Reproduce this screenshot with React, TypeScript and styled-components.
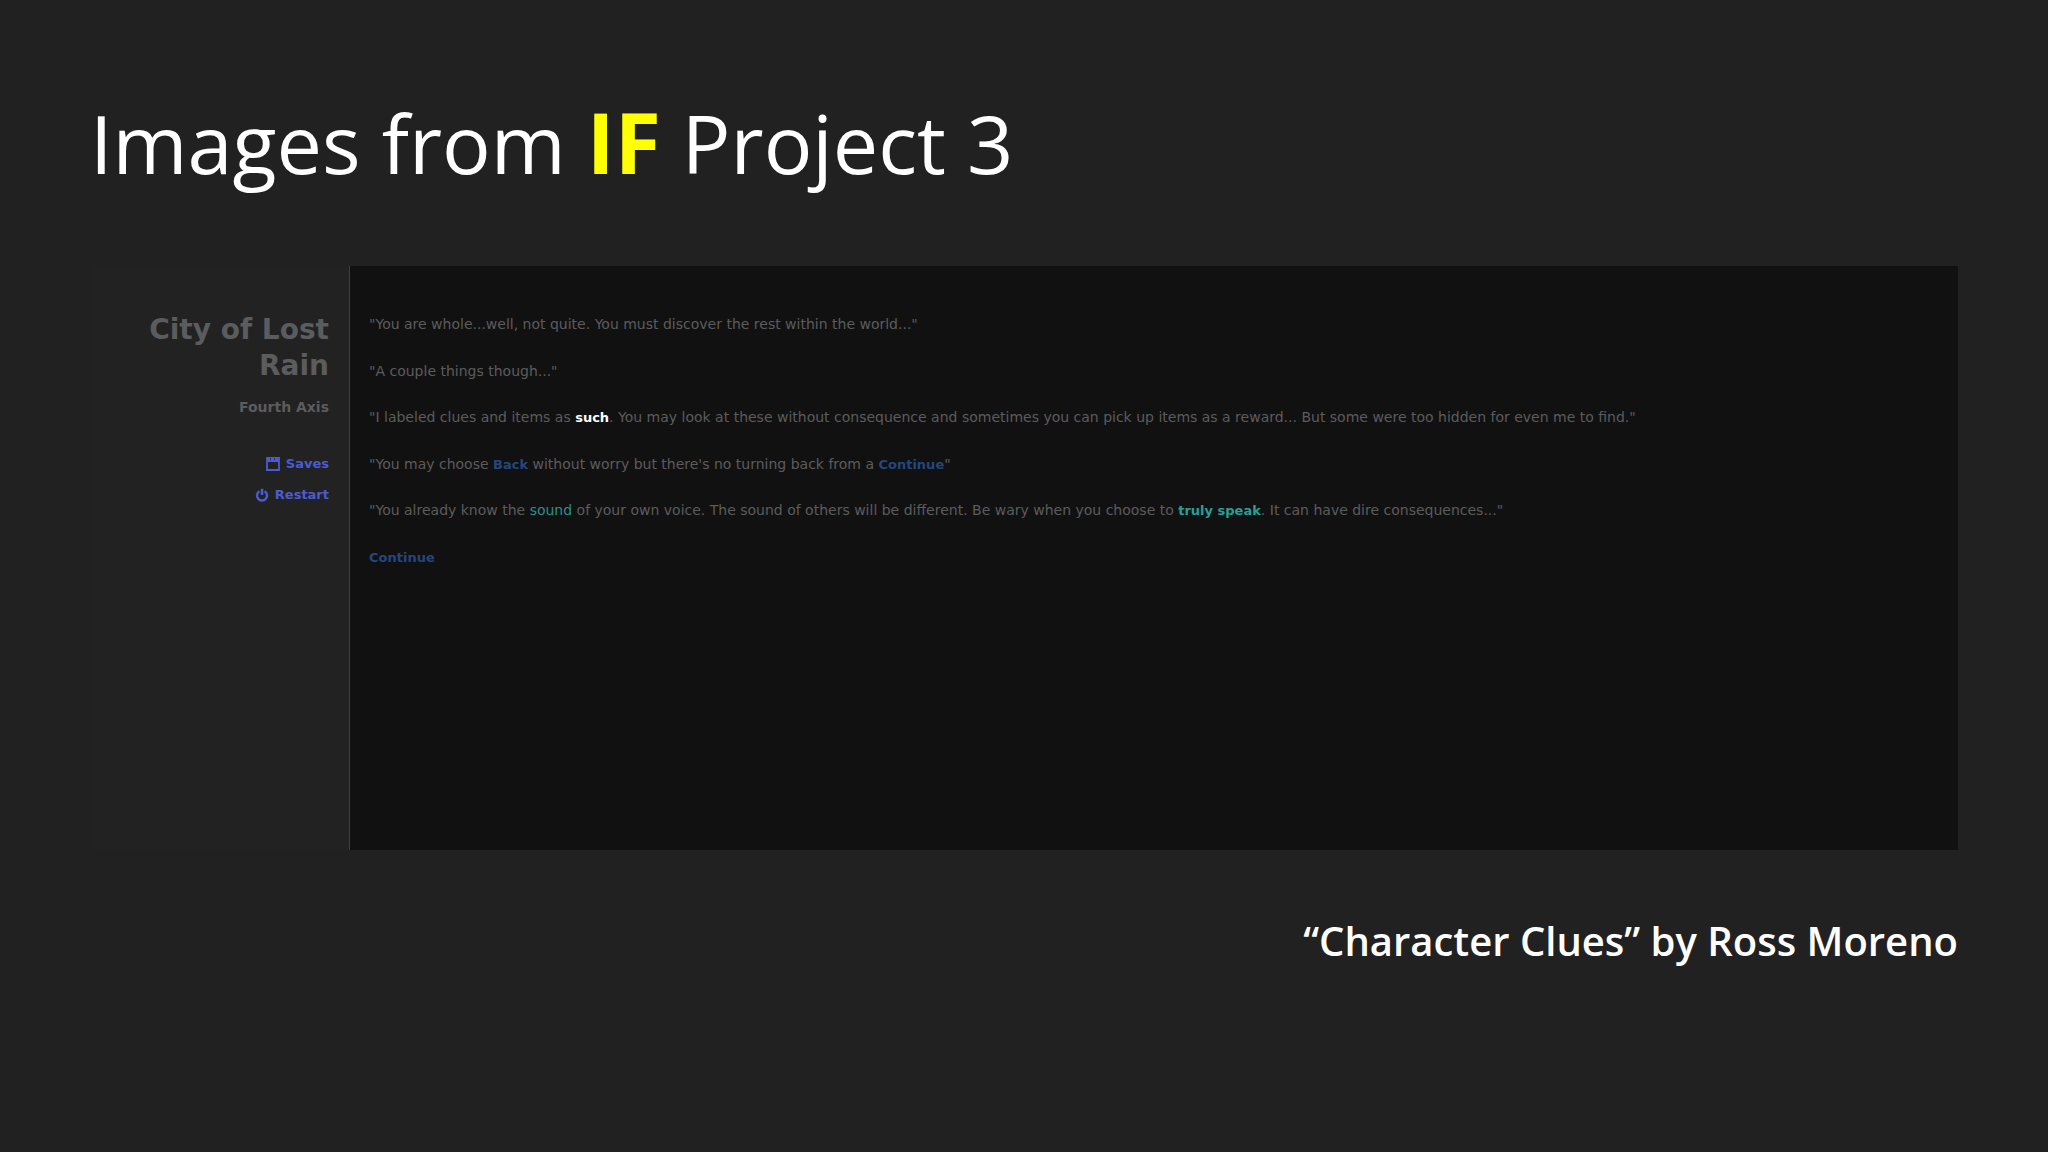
import React from "react";
import styled, { createGlobalStyle } from "styled-components";

const GlobalStyle = createGlobalStyle`
  *, *::before, *::after { box-sizing: border-box; }
  html, body { margin: 0; background: #212122; }
`;

const Slide = styled.main`
  min-height: 100vh;
  padding: 88px 90px 0;
  background: #212122;
  color: #ffffff;
  font-family: "Open Sans", "Noto Sans", sans-serif;
`;

const Heading = styled.h1`
  margin: 0;
  font-size: 81px;
  line-height: 110px;
  font-weight: 400;
`;

const Accent = styled.strong`
  font-size: 84px;
  line-height: 1;
  font-weight: 700;
  color: #ffff00;
`;

const Game = styled.section`
  display: grid;
  grid-template-columns: 259px 1fr;
  min-height: 584px;
  margin-top: 68px;
  font-family: "DejaVu Sans", Verdana, sans-serif;
  font-size: 14px;
`;

const Sidebar = styled.aside`
  display: flex;
  flex-direction: column;
  align-items: flex-end;
  padding: 46px 20px 0 48px;
  text-align: right;
  background: #222223;
`;

const StoryTitle = styled.h2`
  margin: 0;
  font-size: 28px;
  line-height: 36px;
  font-weight: 700;
  color: #5a5c5e;
`;

const Author = styled.p`
  margin: 13px 0 0;
  line-height: 20px;
  font-weight: 700;
  color: #5c5c5e;
`;

const Menu = styled.nav`
  display: flex;
  flex-direction: column;
  align-items: flex-end;
  gap: 11px;
  margin-top: 37px;
`;

const MenuButton = styled.button`
  display: flex;
  align-items: center;
  gap: 6px;
  padding: 0;
  border: 0;
  background: none;
  font: inherit;
  font-size: 13px;
  line-height: 20px;
  font-weight: 700;
  color: #4a5cd0;
  cursor: pointer;
`;

const Icon = styled.svg`
  width: 14px;
  height: 14px;
  fill: none;
  stroke: currentColor;
`;

const Passage = styled.article`
  padding: 35px 19px 40px;
  border-left: 1px solid #404042;
  background: #111112;
`;

const Lines = styled.div`
  display: grid;
  grid-auto-rows: 1fr;
  align-items: center;
  min-height: 280px;
`;

const Line = styled.p`
  margin: 0;
  line-height: 20px;
  color: #5c5c5c;
`;

const linkColors = { clue: "#ffffff", go: "#25467f", sound: "#2a9088", speak: "#27a097" };

const StoryLink = styled.a<{ $kind: keyof typeof linkColors }>`
  color: ${(p) => linkColors[p.$kind]};
  font-size: ${(p) => (p.$kind === "sound" ? "14px" : "13px")};
  font-weight: ${(p) => (p.$kind === "sound" ? 400 : 700)};
  text-decoration: none;
`;

const Caption = styled.p`
  margin: 64px 0 0;
  font-size: 40px;
  line-height: 54px;
  font-weight: 600;
  text-align: right;
`;

const SaveIcon = () => (
  <Icon viewBox="0 0 14 14" aria-hidden="true">
    <path d="M1 1H13V13H1Z" strokeWidth="1.8" />
    <path d="M1 1H13V5H1Z" fill="currentColor" stroke="none" />
    <path d="M4.5 1V3.2M8.5 1V3.2" stroke="#222a60" strokeWidth="0.9" />
  </Icon>
);

const PowerIcon = () => (
  <Icon viewBox="0 0 14 14" aria-hidden="true">
    <path d="M4.4 3.2A5 5 0 1 0 9.6 3.2" strokeWidth="2.4" />
    <path d="M7 0.8V7" strokeWidth="2.6" />
  </Icon>
);

export default function App() {
  return (
    <>
      <GlobalStyle />
      <Slide>
        <Heading>
          Images from <Accent>IF</Accent> Project 3
        </Heading>
        <Game>
          <Sidebar>
            <StoryTitle>City of Lost Rain</StoryTitle>
            <Author>Fourth Axis</Author>
            <Menu>
              <MenuButton type="button"><SaveIcon />Saves</MenuButton>
              <MenuButton type="button"><PowerIcon />Restart</MenuButton>
            </Menu>
          </Sidebar>
          <Passage>
            <Lines>
              <Line>"You are whole...well, not quite. You must discover the rest within the world..."</Line>
              <Line>"A couple things though..."</Line>
              <Line>
                "I labeled clues and items as <StoryLink $kind="clue" href="#such">such</StoryLink>. You may look at
                these without consequence and sometimes you can pick up items as a reward... But some were too hidden
                for even me to find."
              </Line>
              <Line>
                "You may choose <StoryLink $kind="go" href="#back">Back</StoryLink> without worry but there's no
                turning back from a <StoryLink $kind="go" href="#continue">Continue</StoryLink>"
              </Line>
              <Line>
                "You already know the <StoryLink $kind="sound" href="#sound">sound</StoryLink> of your own voice. The
                sound of others will be different. Be wary when you choose to{" "}
                <StoryLink $kind="speak" href="#speak">truly speak</StoryLink>. It can have dire consequences..."
              </Line>
              <Line><StoryLink $kind="go" href="#continue">Continue</StoryLink></Line>
            </Lines>
          </Passage>
        </Game>
        <Caption>“Character Clues” by Ross Moreno</Caption>
      </Slide>
    </>
  );
}
